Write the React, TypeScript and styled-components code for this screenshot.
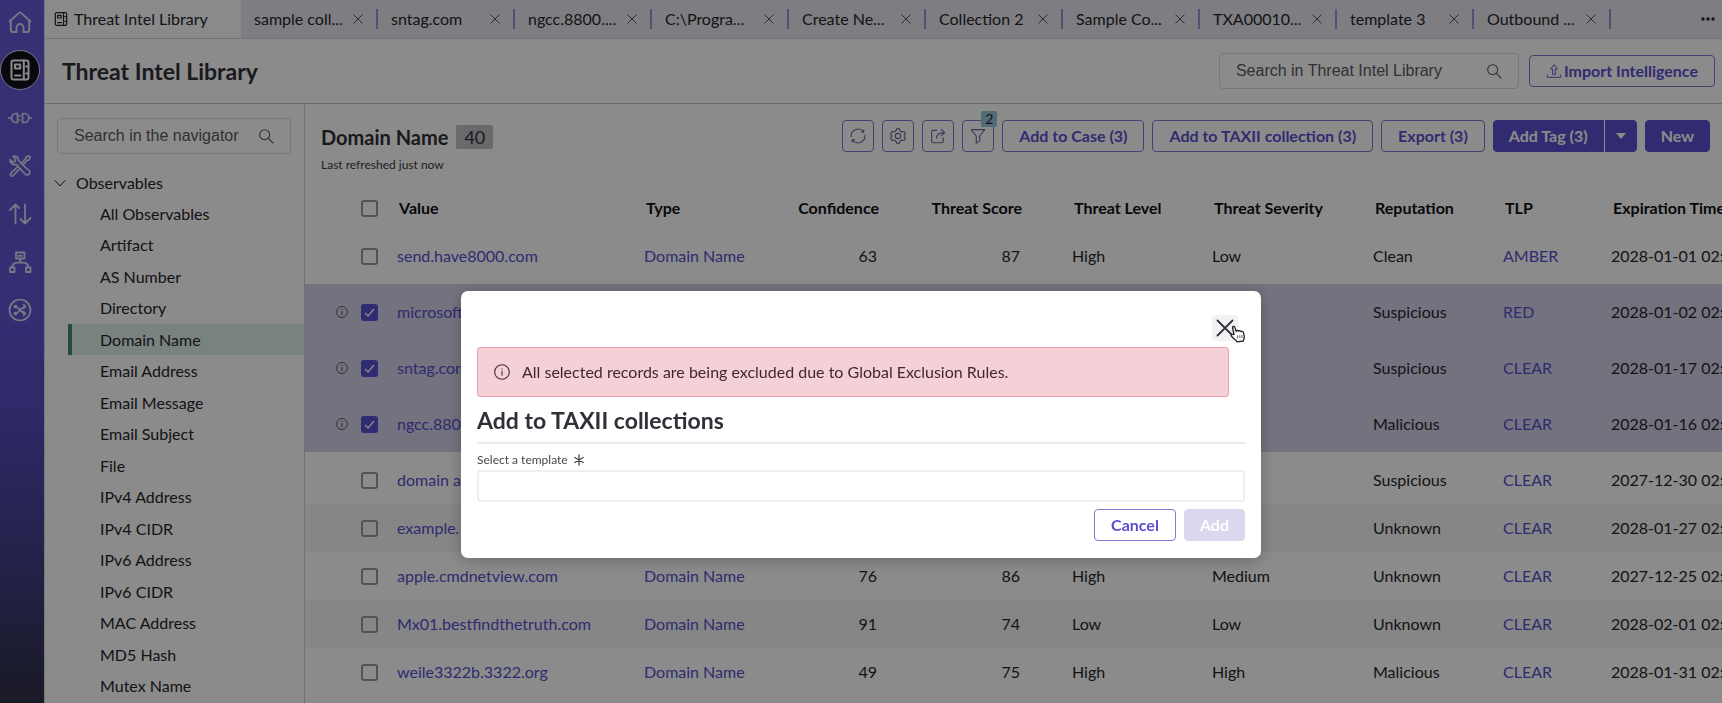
import React from "react";
import styled, { createGlobalStyle, css } from "styled-components";

const primary = "#5b4fd0";
const link = "#5550cf";

const GlobalStyle = createGlobalStyle`
  *, *::before, *::after { box-sizing: border-box; }
  body {
    margin: 0;
    overflow: hidden;
    background: #fff;
    color: #26262b;
    font: 16px/20px Lato, "Open Sans", sans-serif;
  }
  button, input { font: inherit; color: inherit; }
  button { cursor: pointer; }
  svg { display: block; flex: none; }
`;

/* ---------- shell ---------- */

const Shell = styled.div`
  display: flex;
  height: 100vh;
  overflow: hidden;
`;

const Rail = styled.nav`
  flex: none;
  display: flex;
  flex-direction: column;
  align-items: flex-start;
  gap: 8px;
  width: 44px;
  padding-top: 2px;
  background: linear-gradient(180deg, #675bd6 0%, #5f54d0 45%, #544bbc 60%, #3f3d80 82%, #303048 100%);
`;

const RailLink = styled.a<{ $active?: boolean }>`
  display: grid;
  place-items: center;
  width: 40px;
  height: 40px;
  border-radius: 50%;
  border: 1px solid transparent;
  color: #dcdcf4;
  ${(p) =>
    p.$active &&
    css`
      background: #10101c;
      border-color: #d8d8ec;
      color: #fff;
    `}
`;

const Page = styled.div`
  flex: 1;
  min-width: 0;
  display: flex;
  flex-direction: column;
  border-left: 1px solid #d8d8de;
`;

/* ---------- tab strip ---------- */

const TabStrip = styled.div`
  flex: none;
  display: flex;
  align-items: center;
  height: 39px;
  background: #e7e7ef;
  border-bottom: 1px solid #d2d2d8;
`;

const ActiveTab = styled.a`
  align-self: stretch;
  display: flex;
  align-items: center;
  gap: 5px;
  width: 196px;
  padding-left: 8px;
  border-top-right-radius: 4px;
  background: #fdfdfd;
  color: inherit;
  text-decoration: none;
`;

const Tab = styled.div`
  display: flex;
  align-items: center;
  justify-content: space-between;
  width: 137px;
  height: 20px;
  padding: 0 13px;
  border-right: 2px solid #9a92d6;
  white-space: nowrap;
`;

const TabLink = styled.a`
  color: inherit;
  text-decoration: none;
`;

const TabClose = styled.button`
  padding: 0;
  border: 0;
  background: none;
  color: #55555c;
`;

const TabMore = styled.button`
  margin-left: auto;
  padding: 0 7px;
  border: 0;
  background: none;
`;

/* ---------- header ---------- */

const Header = styled.header`
  flex: none;
  display: flex;
  align-items: center;
  gap: 10px;
  height: 65px;
  padding: 0 7px 0 17px;
  border-bottom: 1px solid #c4c4ca;
`;

const PageTitle = styled.h1`
  margin: 0 auto 0 0;
  font-size: 23px;
  line-height: 28px;
  font-weight: 700;
  color: #303038;
`;

const SearchBox = styled.label<{ $wide?: boolean }>`
  display: flex;
  align-items: center;
  gap: 8px;
  width: ${(p) => (p.$wide ? "300px" : "auto")};
  height: 36px;
  padding: 0 16px;
  border: 1px solid #dadade;
  border-radius: 4px;
  color: #5a5a60;

  input {
    flex: 1;
    min-width: 0;
    padding: 0;
    border: 0;
    outline: 0;
    background: none;
    font-family: "Liberation Sans", Arial, sans-serif;
  }
  input::placeholder { color: #5a5a60; opacity: 1; }
`;

/* ---------- buttons ---------- */

const Button = styled.button<{ $solid?: boolean }>`
  display: flex;
  align-items: center;
  justify-content: center;
  gap: 2px;
  height: 32px;
  padding: 0 ${(p) => (p.$solid ? "15px" : "16px")};
  border: 1px solid ${(p) => (p.$solid ? primary : "#8278d2")};
  border-radius: 4px;
  background: ${(p) => (p.$solid ? primary : "transparent")};
  color: ${(p) => (p.$solid ? "#fff" : primary)};
  font-weight: 700;
  white-space: nowrap;

  &:disabled {
    border-color: #d9d8ef;
    background: #d9d8ef;
    color: #fff;
  }
`;

const IconButton = styled(Button)`
  width: 32px;
  padding: 0;
  color: #6e66a4;
`;

const SplitButton = styled.div`
  display: flex;
  gap: 1px;

  ${Button}:first-child { border-radius: 4px 0 0 4px; }
  ${Button}:last-child { width: 32px; padding: 0; border-radius: 0 4px 4px 0; }
`;

const BadgeAnchor = styled.div`
  position: relative;
`;

const FilterBadge = styled.span`
  position: absolute;
  top: -9px;
  right: -3px;
  width: 16px;
  height: 16px;
  border-radius: 2px;
  background: #93c6d8;
  font-size: 14px;
  line-height: 16px;
  text-align: center;
`;

/* ---------- navigator ---------- */

const Body = styled.div`
  flex: 1;
  min-height: 0;
  display: flex;
`;

const Navigator = styled.aside`
  flex: none;
  width: 260px;
  padding-top: 14px;
  border-right: 1px solid #cfcfd5;

  ${SearchBox} { margin: 0 13px 0 12px; }
`;

const Group = styled.button`
  display: flex;
  align-items: center;
  gap: 10px;
  height: 31px;
  margin-top: 13px;
  padding: 0 0 0 9px;
  border: 0;
  background: none;
`;

const NavList = styled.ul`
  margin: 0 0 0 23px;
  padding: 0;
  list-style: none;

  li:nth-child(even) { padding-bottom: 1px; }
`;

const NavLink = styled.a<{ $current?: boolean }>`
  display: block;
  padding-left: 28px;
  border-left: 4px solid ${(p) => (p.$current ? "#3f8f70" : "transparent")};
  background: ${(p) => (p.$current ? "#dcefe7" : "none")};
  color: inherit;
  line-height: 31px;
  text-decoration: none;
`;

/* ---------- records ---------- */

const Records = styled.main`
  flex: 1;
  min-width: 0;
  overflow: hidden;
`;

const Toolbar = styled.div`
  display: flex;
  justify-content: space-between;
  align-items: flex-start;
  height: 80px;
  padding: 16px 12px 0 16px;
`;

const Actions = styled.div`
  display: flex;
  gap: 8px;
`;

const ListTitle = styled.h2`
  display: flex;
  align-items: center;
  gap: 8px;
  height: 33px;
  margin: 0;
  font-size: 20px;
  line-height: 24px;
  color: #303038;
`;

const Count = styled.span`
  padding: 0 8px;
  border-radius: 2px;
  background: #c2c2c6;
  font-size: 18px;
  font-weight: 400;
`;

const Note = styled.p`
  margin: 2px 0 0;
  font-size: 12px;
  line-height: 20px;
  color: #3c3c42;
`;

const Table = styled.table`
  table-layout: fixed;
  width: 1417px;
  min-width: 100%;
  border-collapse: collapse;

  th, td {
    padding: 0;
    text-align: left;
    white-space: nowrap;
  }
  th {
    height: 48px;
    padding-left: 2px;
    color: #101014;
  }
  a { color: ${link}; text-decoration: none; }
  .num { padding-right: 2px; text-align: right; }
  th.num { padding-right: 0; }
`;

const Row = styled.tr<{ $selected?: boolean; $striped?: boolean; $edge?: "top" | "bottom" }>`
  height: ${(p) => (p.$selected ? "56px" : p.$edge ? "52px" : "48px")};
  background: ${(p) => (p.$selected ? "#d4d2e8" : p.$striped ? "#f6f6f6" : "none")};
  td {
    ${(p) => p.$edge === "top" && "padding-top: 4px;"}
    ${(p) => p.$edge === "bottom" && "padding-bottom: 4px;"}
  }
`;

const Picker = styled.div`
  display: flex;
  align-items: center;
  justify-content: flex-end;
  gap: 13px;
  padding-right: 19px;
  color: #5a5a62;
`;

const Check = styled.input`
  appearance: none;
  flex: none;
  width: 17px;
  height: 17px;
  margin: 0;
  border: 2px solid #98989e;
  border-radius: 3px;

  &:checked {
    border-color: ${primary};
    background: ${primary} url("data:image/svg+xml,%3Csvg xmlns='http://www.w3.org/2000/svg' viewBox='0 0 13 13'%3E%3Cpath d='M2 7l3 3 6-7' fill='none' stroke='white' stroke-width='1.4'/%3E%3C/svg%3E") center / 13px no-repeat;
  }
`;

/* ---------- dialog ---------- */

const Backdrop = styled.div`
  position: fixed;
  inset: 0;
  display: flex;
  justify-content: center;
  align-items: flex-start;
  padding-top: 291px;
  background: rgba(0, 0, 0, 0.455);
`;

const Dialog = styled.section`
  display: flex;
  flex-direction: column;
  width: 800px;
  max-width: 100%;
  padding: 24px 16px 17px;
  border-radius: 7px;
  background: #fff;
  box-shadow: 0 2px 16px rgba(0, 0, 0, 0.25);
`;

const CloseButton = styled.button`
  position: relative;
  align-self: flex-end;
  display: grid;
  place-items: center;
  width: 26px;
  height: 26px;
  margin-right: 7px;
  padding: 0;
  border: 0;
  border-radius: 4px;
  background: #f2f2f5;
  color: #33333a;
`;

const Pointer = styled.svg`
  position: absolute;
  left: 18px;
  top: 10px;
`;

const Alert = styled.div`
  display: flex;
  align-items: center;
  gap: 12px;
  height: 50px;
  margin: 6px 16px 0 0;
  padding: 0 16px;
  border: 1px solid #eaa0b0;
  border-radius: 3px;
  background: #f4d0d7;
  color: #46262e;
`;

const DialogTitle = styled.h2`
  margin: 9px 0 0;
  padding-bottom: 8px;
  border-bottom: 2px solid #ebebee;
  font-size: 23px;
  line-height: 28px;
  color: #303038;
`;

const FieldLabel = styled.label`
  display: flex;
  align-items: center;
  gap: 5px;
  margin-top: 6px;
  font-size: 12px;
  line-height: 20px;
  color: #46464c;
`;

const Field = styled.input`
  width: 100%;
  height: 32px;
  padding: 0 12px;
  border: 2px solid #eeeef0;
  border-radius: 4px;
  outline: 0;
`;

const Footer = styled.footer`
  display: flex;
  justify-content: flex-end;
  gap: 8px;
  margin-top: 7px;
`;

/* ---------- icons ---------- */

const Icon = ({ size = 24, w = 1.5, children }: { size?: number; w?: number; children: React.ReactNode }) => (
  <svg
    width={size}
    height={size}
    viewBox="0 0 24 24"
    fill="none"
    stroke="currentColor"
    strokeWidth={w}
    strokeLinecap="round"
    strokeLinejoin="round"
    aria-hidden="true"
  >
    {children}
  </svg>
);

const libraryPaths = (
  <>
    <rect x="3.5" y="2.5" width="17" height="19" rx="2" />
    <path d="M15.8 2.5v19M18 8.5h2M18 15.5h2M7 6.5h5.2v4H7zM7 17.5h5.5" />
  </>
);

const HomeIcon = () => (
  <Icon w={1.8}>
    <path d="M1.500 11.500 11 2.800a1.500 1.500 0 0 1 2.200 0l9.300 8.700M2.800 10.500V20a2 2 0 0 0 2 2H8.500v-4.500a3.500 3.500 0 0 1 7 0V22h3.700a2 2 0 0 0 2-2v-9.500" />
  </Icon>
);
const LibraryIcon = () => <Icon w={2}>{libraryPaths}</Icon>;
const PlugIcon = () => (
  <Icon w={1.7}>
    <path d="M.5 12H4M9.500 7.500H8a4.500 4.500 0 0 0 0 9h1.500zM9.500 10h2.200M9.500 14h2.200M14.500 7.500h1.800a4.500 4.500 0 0 1 0 9h-1.800zM21 12h2.500" />
  </Icon>
);
const ToolsIcon = () => (
  <Icon w={1.7}>
    <path d="M2 5.500 4.500 8 7 7.500 7.500 5 5 2.500c2.500-1 5.500.5 5.500 4l8.500 8.500c2 .2 3.500 2.500 2.500 4.500a2.800 2.800 0 0 1-4.500.5L8.500 10.500C5 11 1.500 9 2 5.500z" />
    <path d="M13 9.500 17.500 5l.5-2 3-1.200L22.200 3 21 6l-2 .5-4.300 4.700M9.500 13 3 19.200a1.600 1.600 0 0 0 2.300 2.300l6.200-6.500" />
  </Icon>
);
const ArrowsIcon = () => (
  <Icon w={1.8}>
    <path d="M7.500 21.500V2.500M2 8l5.500-5.500L11 6M17 2.500v19M12.500 17l4.500 4.500L22.500 16" />
  </Icon>
);
const TreeIcon = () => (
  <Icon w={1.8}>
    <path d="M8 2.500h8.500v6H8zM2 17.500h4.500V22H2zM18 17.500h4.500V22H18zM12.200 8.500v4.200M4.200 17.500c0-3 2-4.800 5-4.800h6c3 0 5 1.800 5 4.800M10 5.800h4" />
  </Icon>
);
const ShuffleIcon = () => (
  <Icon w={1.7}>
    <circle cx="12" cy="12" r="10.500" />
    <path d="M6.500 8.500c3 0 3.500 1.500 5.500 3.500s3 3.500 5.500 3.500M6.500 15.500c3 0 3.500-1.500 5.500-3.500s3-3.500 5.500-3.500M15.500 6.500l2 2-2 2M15.500 13.500l2 2-2 2" />
    <circle cx="7.500" cy="8.500" r="1" />
    <circle cx="7.500" cy="15.500" r="1" />
  </Icon>
);
const SearchIcon = () => (
  <Icon size={16} w={1.6}>
    <circle cx="10" cy="10" r="7.500" />
    <path d="m15.500 15.500 7 7" />
  </Icon>
);
const CloseIcon = ({ size = 10, w = 2.4 }: { size?: number; w?: number }) => (
  <Icon size={size} w={w}>
    <path d="m2 2 20 20M22 2 2 22" />
  </Icon>
);
const InfoIcon = ({ size = 12, w = 2 }: { size?: number; w?: number }) => (
  <Icon size={size} w={w}>
    <circle cx="12" cy="12" r="11" />
    <path d="M12 11v6M12 7v.5" />
  </Icon>
);
const ChevronIcon = () => (
  <Icon size={12} w={2}>
    <path d="m2 7 10 11L22 7" />
  </Icon>
);
const UploadIcon = () => (
  <Icon size={16} w={1.4}>
    <path d="M10 16.500V9H7l5-6.500L17 9h-3v7.500zM2 18v3.500h20V18" />
  </Icon>
);
const RefreshIcon = () => (
  <Icon size={18} w={1.5}>
    <path d="M2.800 13A9.300 9.300 0 0 1 19 6M21.200 11A9.300 9.300 0 0 1 5 18" />
    <path d="M20 3.800v3.400h-3.400zM4 20.200v-3.400h3.400z" fill="currentColor" strokeWidth="0.800" />
  </Icon>
);
const GearIcon = () => (
  <Icon size={18} w={1.5}>
    <path d="M10 2.500h4l.8 2.900 2.300 1.300 2.900-.8 2 3.500-2.100 2.600 2.100 2.600-2 3.500-2.900-.8-2.300 1.300-.8 2.900h-4l-.8-2.900-2.300-1.300-2.900.8-2-3.500L4.100 12 2 9.400l2-3.500 2.900.8 2.300-1.300z" />
    <circle cx="12" cy="12" r="3.500" />
  </Icon>
);
const ShareIcon = () => (
  <Icon size={18} w={1.5}>
    <path d="M10 4.500H5.500a2 2 0 0 0-2 2V19a2 2 0 0 0 2 2H17a2 2 0 0 0 2-2v-4.500M10 15c0-5 3-7.500 10.500-7.500M16.500 3.500l4.500 4-4.500 4" />
  </Icon>
);
const FilterIcon = () => (
  <Icon size={18} w={1.5}>
    <path d="M3 3.500h18L14.300 12v6.500L9.700 21.500V12z" />
  </Icon>
);

/* ---------- data ---------- */

const railItems = [
  { label: "Home", icon: <HomeIcon /> },
  { label: "Threat Intel Library", icon: <LibraryIcon />, active: true },
  { label: "Integrations", icon: <PlugIcon /> },
  { label: "Tools", icon: <ToolsIcon /> },
  { label: "Transfers", icon: <ArrowsIcon /> },
  { label: "Hierarchy", icon: <TreeIcon /> },
  { label: "Shuffle", icon: <ShuffleIcon /> },
];

const tabs = [
  "sample coll...", "sntag.com", "ngcc.8800....", "C:\\Progra...", "Create Ne...",
  "Collection 2", "Sample Co...", "TXA00010...", "template 3", "Outbound ...",
];

const observables = [
  "All Observables", "Artifact", "AS Number", "Directory", "Domain Name", "Email Address",
  "Email Message", "Email Subject", "File", "IPv4 Address", "IPv4 CIDR", "IPv6 Address",
  "IPv6 CIDR", "MAC Address", "MD5 Hash", "Mutex Name",
];

interface RecordRow {
  value: string;
  type?: string;
  conf?: number;
  score?: number;
  level?: string;
  sev?: string;
  rep: string;
  tlp: string;
  exp: string;
  selected?: boolean;
}

const records: RecordRow[] = [
  { value: "send.have8000.com", type: "Domain Name", conf: 63, score: 87, level: "High", sev: "Low", rep: "Clean", tlp: "AMBER", exp: "2028-01-01 02:" },
  { value: "microsoft", rep: "Suspicious", tlp: "RED", exp: "2028-01-02 02:", selected: true },
  { value: "sntag.com", rep: "Suspicious", tlp: "CLEAR", exp: "2028-01-17 02:", selected: true },
  { value: "ngcc.880", rep: "Malicious", tlp: "CLEAR", exp: "2028-01-16 02:", selected: true },
  { value: "domain a", rep: "Suspicious", tlp: "CLEAR", exp: "2027-12-30 02:" },
  { value: "example.", rep: "Unknown", tlp: "CLEAR", exp: "2028-01-27 02:" },
  { value: "apple.cmdnetview.com", type: "Domain Name", conf: 76, score: 86, level: "High", sev: "Medium", rep: "Unknown", tlp: "CLEAR", exp: "2027-12-25 02:" },
  { value: "Mx01.bestfindthetruth.com", type: "Domain Name", conf: 91, score: 74, level: "Low", sev: "Low", rep: "Unknown", tlp: "CLEAR", exp: "2028-02-01 02:" },
  { value: "weile3322b.3322.org", type: "Domain Name", conf: 49, score: 75, level: "High", sev: "High", rep: "Malicious", tlp: "CLEAR", exp: "2028-01-31 02:" },
];

const columnWidths = [92, 247, 119, 116, 143, 50, 140, 161, 130, 108, 111];

export default function App() {
  return (
    <>
      <GlobalStyle />
      <Shell>
        <Rail aria-label="Main">
          {railItems.map((item) => (
            <RailLink key={item.label} href="#" aria-label={item.label} $active={item.active}>
              {item.icon}
            </RailLink>
          ))}
        </Rail>
        <Page>
          <TabStrip>
            <ActiveTab href="#">
              <Icon size={16} w={1.8}>{libraryPaths}</Icon>
              Threat Intel Library
            </ActiveTab>
            {tabs.map((t) => (
              <Tab key={t}>
                <TabLink href="#">{t}</TabLink>
                <TabClose aria-label={`Close ${t}`}><CloseIcon /></TabClose>
              </Tab>
            ))}
            <TabMore aria-label="More tabs">
              <svg width="14" height="4" viewBox="0 0 14 4" fill="currentColor">
                <circle cx="2" cy="2" r="1.700" />
                <circle cx="7" cy="2" r="1.700" />
                <circle cx="12" cy="2" r="1.700" />
              </svg>
            </TabMore>
          </TabStrip>
          <Header>
            <PageTitle>Threat Intel Library</PageTitle>
            <SearchBox $wide>
              <input type="text" aria-label="Search library" placeholder="Search in Threat Intel Library" />
              <SearchIcon />
            </SearchBox>
            <Button><UploadIcon />Import Intelligence</Button>
          </Header>
          <Body>
            <Navigator>
              <SearchBox>
                <input type="text" aria-label="Search navigator" placeholder="Search in the navigator" />
                <SearchIcon />
              </SearchBox>
              <Group aria-expanded="true"><ChevronIcon />Observables</Group>
              <NavList>
                {observables.map((o) => (
                  <li key={o}><NavLink href="#" $current={o === "Domain Name"}>{o}</NavLink></li>
                ))}
              </NavList>
            </Navigator>
            <Records>
              <Toolbar>
                <div>
                  <ListTitle>Domain Name <Count>40</Count></ListTitle>
                  <Note>Last refreshed just now</Note>
                </div>
                <Actions>
                  <IconButton aria-label="Refresh"><RefreshIcon /></IconButton>
                  <IconButton aria-label="Settings"><GearIcon /></IconButton>
                  <IconButton aria-label="Share"><ShareIcon /></IconButton>
                  <BadgeAnchor>
                    <IconButton aria-label="Filter"><FilterIcon /></IconButton>
                    <FilterBadge>2</FilterBadge>
                  </BadgeAnchor>
                  <Button>Add to Case (3)</Button>
                  <Button>Add to TAXII collection (3)</Button>
                  <Button>Export (3)</Button>
                  <SplitButton>
                    <Button $solid>Add Tag (3)</Button>
                    <Button $solid aria-label="More tag actions">
                      <svg width="10" height="6" viewBox="0 0 10 6" fill="currentColor"><path d="M0 0h10L5 6z" /></svg>
                    </Button>
                  </SplitButton>
                  <Button $solid>New</Button>
                </Actions>
              </Toolbar>
              <Table>
                <colgroup>
                  {columnWidths.map((w, i) => <col key={i} width={w} />)}
                </colgroup>
                <thead>
                  <tr>
                    <th><Picker><Check type="checkbox" aria-label="Select all" /></Picker></th>
                    <th>Value</th>
                    <th>Type</th>
                    <th className="num">Confidence</th>
                    <th className="num">Threat Score</th>
                    <th aria-hidden="true" />
                    <th>Threat Level</th>
                    <th>Threat Severity</th>
                    <th>Reputation</th>
                    <th>TLP</th>
                    <th>Expiration Time</th>
                  </tr>
                </thead>
                <tbody>
                  {records.map((r, i) => (
                    <Row
                      key={r.value}
                      $selected={r.selected}
                      $striped={i % 2 === 1}
                      $edge={
                        r.selected ? undefined
                          : records[i + 1]?.selected ? "bottom"
                          : records[i - 1]?.selected ? "top"
                          : undefined
                      }
                    >
                      <td>
                        <Picker>
                          {r.selected && <InfoIcon />}
                          <Check type="checkbox" aria-label={`Select ${r.value}`} defaultChecked={r.selected} />
                        </Picker>
                      </td>
                      <td><a href="#">{r.value}</a></td>
                      <td>{r.type && <a href="#">{r.type}</a>}</td>
                      <td className="num">{r.conf}</td>
                      <td className="num">{r.score}</td>
                      <td />
                      <td>{r.level}</td>
                      <td>{r.sev}</td>
                      <td>{r.rep}</td>
                      <td><a href="#">{r.tlp}</a></td>
                      <td>{r.exp}</td>
                    </Row>
                  ))}
                </tbody>
              </Table>
            </Records>
          </Body>
        </Page>
      </Shell>
      <Backdrop>
        <Dialog role="dialog" aria-modal="true" aria-labelledby="dialog-title">
          <CloseButton aria-label="Close">
            <CloseIcon size={18} w={2.4} />
            <Pointer width="16" height="18" viewBox="0 0 16 18" fill="#fff" stroke="#222" strokeWidth="1.300" strokeLinejoin="round">
              <path d="M4 9.500 2.600 3C2.300 1.200 4.300.8 4.800 2.400L6.200 6.500C6.400 5 8.300 5 8.700 6.300 9.200 5.300 10.800 5.500 11.100 6.700c.8-.7 2-.4 2.300.7l.9 4c.2 1.600-.6 2.400-.9 4.600l-6.400.8C6.400 15 3.300 13.600 1.600 11.400c-1-1.300.4-2.500 2.400-1.900z" />
              <path d="M7.500 10.500l.4 3M9.700 10.300l.4 3M11.800 10l.4 3" strokeWidth="0.700" />
            </Pointer>
          </CloseButton>
          <Alert role="alert">
            <InfoIcon size={16} w={1.6} />
            All selected records are being excluded due to Global Exclusion Rules.
          </Alert>
          <DialogTitle id="dialog-title">Add to TAXII collections</DialogTitle>
          <FieldLabel htmlFor="template">
            Select a template
            <Icon size={12} w={2.6}><path d="M12 2v20M3.500 7l17 10M20.500 7l-17 10" /></Icon>
          </FieldLabel>
          <Field id="template" type="text" required />
          <Footer>
            <Button>Cancel</Button>
            <Button $solid disabled>Add</Button>
          </Footer>
        </Dialog>
      </Backdrop>
    </>
  );
}
